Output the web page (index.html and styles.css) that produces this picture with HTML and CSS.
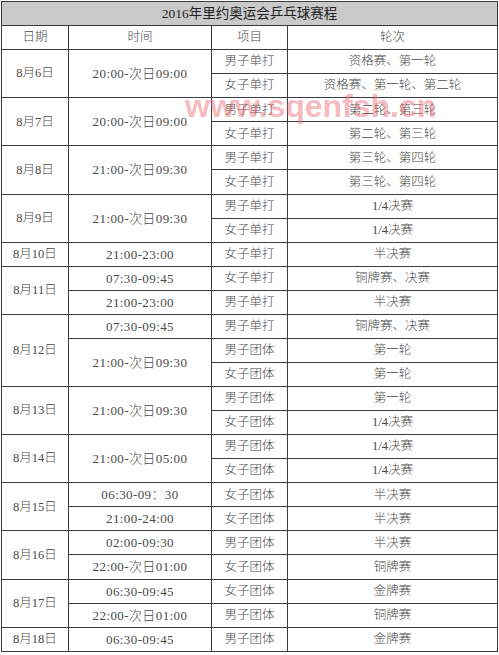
FILE: index.html
```html
<!DOCTYPE html>
<html lang="zh-CN">
<head>
<meta charset="utf-8">
<title>2016年里约奥运会乒乓球赛程</title>
<link rel="stylesheet" href="styles.css">
</head>
<body>
<div class="page">
<table class="schedule">
  <colgroup>
    <col class="c-date"><col class="c-time"><col class="c-event"><col class="c-round">
  </colgroup>
  <tr class="title-row"><td colspan="4">2016年里约奥运会乒乓球赛程</td></tr>
  <tr><td>日期</td><td>时间</td><td>项目</td><td>轮次</td></tr>
  <tr><td rowspan="2">8月6日</td><td rowspan="2" class="t">20:00-次日09:00</td><td>男子单打</td><td>资格赛、第一轮</td></tr>
  <tr><td>女子单打</td><td>资格赛、第一轮、第二轮</td></tr>
  <tr><td rowspan="2">8月7日</td><td rowspan="2" class="t">20:00-次日09:00</td><td>男子单打</td><td>第二轮、第三轮</td></tr>
  <tr><td>女子单打</td><td>第二轮、第三轮</td></tr>
  <tr><td rowspan="2">8月8日</td><td rowspan="2" class="t">21:00-次日09:30</td><td>男子单打</td><td>第三轮、第四轮</td></tr>
  <tr><td>女子单打</td><td>第三轮、第四轮</td></tr>
  <tr><td rowspan="2">8月9日</td><td rowspan="2" class="t">21:00-次日09:30</td><td>男子单打</td><td>1/4决赛</td></tr>
  <tr><td>女子单打</td><td>1/4决赛</td></tr>
  <tr><td>8月10日</td><td class="t">21:00-23:00</td><td>女子单打</td><td>半决赛</td></tr>
  <tr><td rowspan="2">8月11日</td><td class="t">07:30-09:45</td><td>女子单打</td><td>铜牌赛、决赛</td></tr>
  <tr><td class="t">21:00-23:00</td><td>男子单打</td><td>半决赛</td></tr>
  <tr><td rowspan="3">8月12日</td><td class="t">07:30-09:45</td><td>男子单打</td><td>铜牌赛、决赛</td></tr>
  <tr><td rowspan="2" class="t">21:00-次日09:30</td><td>男子团体</td><td>第一轮</td></tr>
  <tr><td>女子团体</td><td>第一轮</td></tr>
  <tr><td rowspan="2">8月13日</td><td rowspan="2" class="t">21:00-次日09:30</td><td>男子团体</td><td>第一轮</td></tr>
  <tr><td>女子团体</td><td>1/4决赛</td></tr>
  <tr><td rowspan="2">8月14日</td><td rowspan="2" class="t">21:00-次日05:00</td><td>男子团体</td><td>1/4决赛</td></tr>
  <tr><td>女子团体</td><td>1/4决赛</td></tr>
  <tr><td rowspan="2">8月15日</td><td class="t">06:30-09：30</td><td>女子团体</td><td>半决赛</td></tr>
  <tr><td class="t">21:00-24:00</td><td>女子团体</td><td>半决赛</td></tr>
  <tr><td rowspan="2">8月16日</td><td class="t">02:00-09:30</td><td>男子团体</td><td>半决赛</td></tr>
  <tr><td class="t">22:00-次日01:00</td><td>女子团体</td><td>铜牌赛</td></tr>
  <tr><td rowspan="2">8月17日</td><td class="t">06:30-09:45</td><td>女子团体</td><td>金牌赛</td></tr>
  <tr><td class="t">22:00-次日01:00</td><td>男子团体</td><td>铜牌赛</td></tr>
  <tr><td>8月18日</td><td class="t">06:30-09:45</td><td>男子团体</td><td>金牌赛</td></tr>
</table>
<div class="watermark">www.sqenfsh.cn</div>
</div>
</body>
</html>
```
FILE: styles.css
```css
html, body {
  margin: 0;
  padding: 0;
  background: #fff;
}
.page {
  position: relative;
  padding: 1px 0 0 1px;
  width: 499px;
  height: 655px;
  box-sizing: border-box;
}
.schedule {
  border-collapse: collapse;
  table-layout: fixed;
  width: 496px;
  height: 651px;
  font-family: "Liberation Serif", "Noto Sans CJK SC", serif;
  font-size: 12.5px;
  font-weight: 300;
  color: #4a4a4a;
}
.c-date { width: 67px; }
.c-time { width: 143px; }
.c-event { width: 76px; }
.c-round { width: 210px; }
.schedule tr { height: 24px; }
.schedule td {
  border: 1px solid #3c3c3c;
  text-align: center;
  vertical-align: middle;
  padding: 0;
  line-height: 1;
  white-space: nowrap;
}
.schedule .t {
  font-size: 13px;
  letter-spacing: 0.4px;
}
.title-row td {
  background: #c9c9c9;
  font-size: 13.5px;
  font-weight: 400;
  color: #222;
}
.watermark {
  position: absolute;
  left: 185px;
  top: 90px;
  font-family: "Liberation Sans", Arial, sans-serif;
  font-weight: bold;
  font-size: 32px;
  line-height: 32px;
  letter-spacing: 0;
  color: rgba(236, 100, 114, 0.45);
  pointer-events: none;
}
```
